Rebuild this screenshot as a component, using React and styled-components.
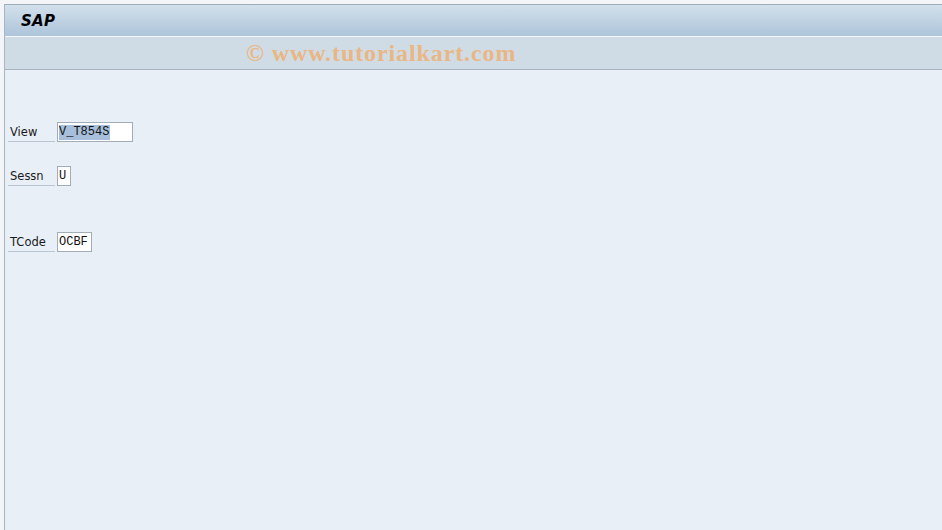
import React from "react";
import styled, { createGlobalStyle } from "styled-components";

const GlobalStyle = createGlobalStyle`
  html, body {
    margin: 0;
    padding: 0;
    background: #f3f5f9;
  }
  #root {
    height: 530px;
  }
`;

const Frame = styled.div`
  height: 100%;
  box-sizing: border-box;
  padding: 4px 0 0 4px;
  display: flex;
  flex-direction: column;
`;

const Window = styled.div`
  flex: 1;
  display: flex;
  flex-direction: column;
  border-left: 1px solid #a9b5c3;
  border-top: 1px solid #9eabb9;
  background: #e8eff6;
`;

const TitleBar = styled.div`
  height: 31px;
  display: flex;
  align-items: center;
  padding-left: 16px;
  background: linear-gradient(#d2e0eb, #adc4da);
  border-bottom: 1px solid #f4f8fb;
`;

const Title = styled.span`
  font-family: "DejaVu Sans", Verdana, sans-serif;
  font-weight: bold;
  font-style: italic;
  font-size: 15px;
  letter-spacing: 0.3px;
  color: #000;
`;

const AppToolbar = styled.div`
  height: 32px;
  display: flex;
  align-items: center;
  padding-left: 241px;
  background: #cfdce6;
  border-bottom: 1px solid #a6b2bf;
`;

const Watermark = styled.span`
  font-family: "Liberation Serif", "Times New Roman", serif;
  font-weight: bold;
  font-size: 24px;
  letter-spacing: 0.9px;
  color: #eab683;
  padding-top: 1px;
`;

const Content = styled.div`
  flex: 1;
  padding: 52px 0 0 3px;
  display: flex;
  flex-direction: column;
`;

const Row = styled.div`
  display: flex;
  align-items: stretch;
  height: 20px;
  margin-top: ${(p) => p.$gap || 0}px;
`;

const Label = styled.div`
  width: 47px;
  box-sizing: border-box;
  padding: 3px 0 0 2px;
  margin-right: 2px;
  border-bottom: 1px solid #b9c5d2;
  font-family: "DejaVu Sans", Tahoma, sans-serif;
  font-size: 11.5px;
  color: #1a1a1a;
`;

const Field = styled.div`
  width: ${(p) => p.$width}px;
  box-sizing: border-box;
  background: #fff;
  border: 1px solid #a3adb8;
  padding: 2px 0 0 1px;
  font-family: "Liberation Mono", "Courier New", monospace;
  font-size: 12px;
  line-height: 15px;
  color: #111;
  white-space: nowrap;
  overflow: hidden;
`;

const Selected = styled.span`
  display: inline-block;
  background: #a7bfda;
  padding-right: 1px;
`;

const fields = [
  { label: "View", value: "V_T854S", width: 76, gap: 0, selected: true },
  { label: "Sessn", value: "U", width: 14, gap: 24 },
  { label: "TCode", value: "OCBF", width: 35, gap: 46 },
];

export default function App() {
  return (
    <>
      <GlobalStyle />
      <Frame>
        <Window>
          <TitleBar>
            <Title>SAP</Title>
          </TitleBar>
          <AppToolbar>
            <Watermark>© www.tutorialkart.com</Watermark>
          </AppToolbar>
          <Content>
            {fields.map((f) => (
              <Row key={f.label} $gap={f.gap}>
                <Label>{f.label}</Label>
                <Field $width={f.width}>
                  {f.selected ? <Selected>{f.value}</Selected> : f.value}
                </Field>
              </Row>
            ))}
          </Content>
        </Window>
      </Frame>
    </>
  );
}
